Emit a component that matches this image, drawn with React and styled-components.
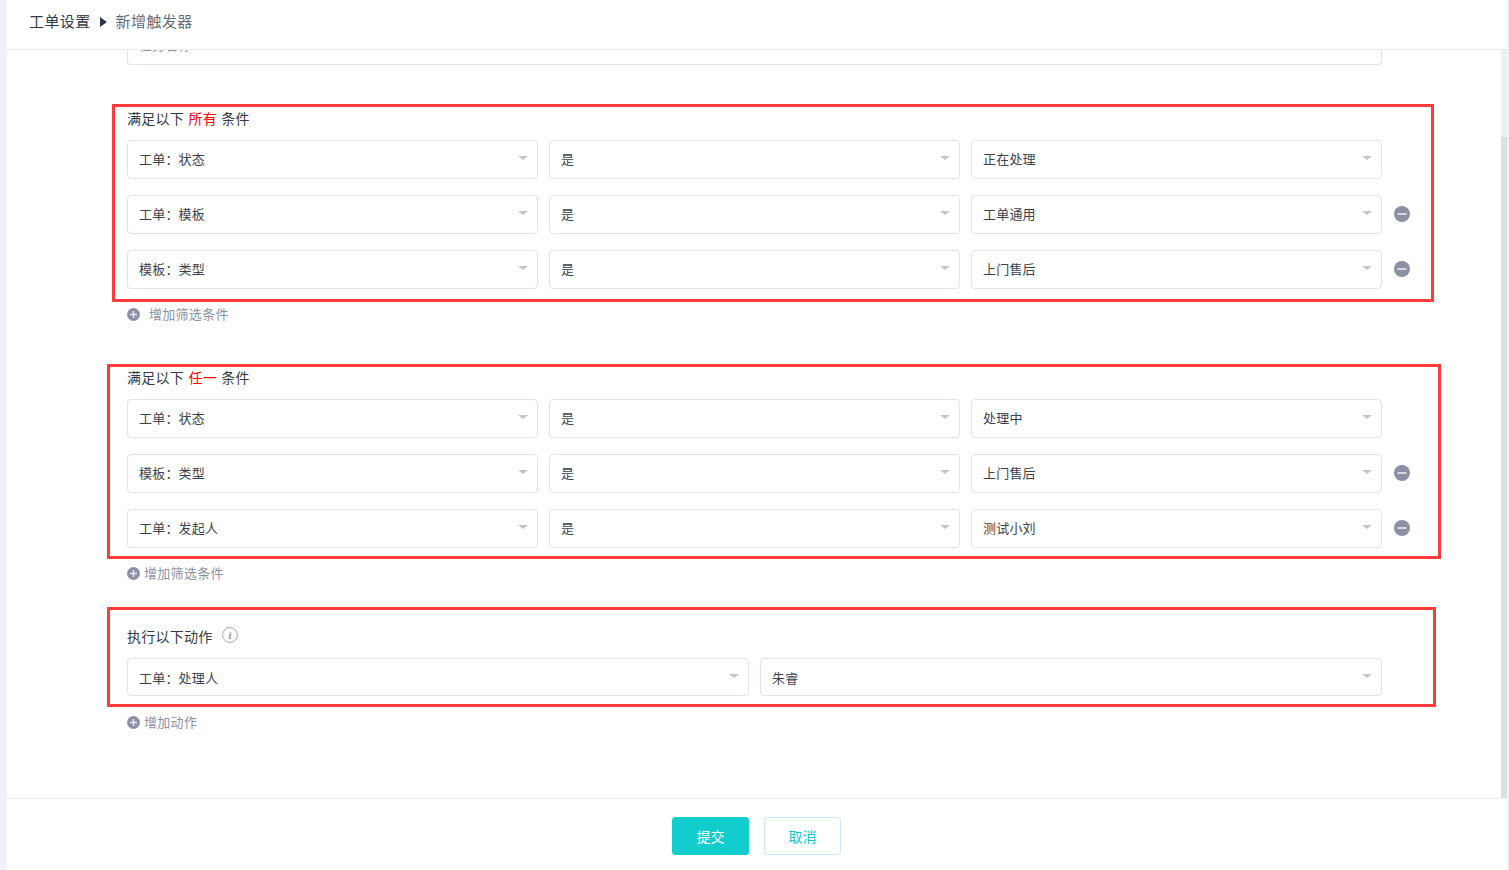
import React from "react";
import styled, { createGlobalStyle } from "styled-components";

const Global = createGlobalStyle`
  html, body { margin: 0; padding: 0; height: 100%; background: #f0f2f7; overflow: hidden; }
  body { font-family: "Noto Sans CJK SC", "Liberation Sans", sans-serif; color: #333a45; }
  * { box-sizing: border-box; }
`;

const Page = styled.div`
  width: 1500px;
  height: 870px;
  margin-left: 7px;
  background: #fff;
  display: flex;
  flex-direction: column;
`;

const Header = styled.header`
  height: 50px;
  flex: none;
  border-bottom: 1px solid #e8eaee;
  display: flex;
  align-items: center;
  padding: 0 0 8px 22px;
  font-size: 15px;
  line-height: 20px;
  letter-spacing: 0.4px;
`;

const Crumb = styled.span`
  color: ${p => (p.$muted ? "#666c76" : "#333a45")};
`;

const CrumbArrow = styled.span`
  width: 0;
  height: 0;
  margin: 3px 9px 0 9px;
  border-style: solid;
  border-width: 5.5px 0 5.5px 7px;
  border-color: transparent transparent transparent #2f3645;
`;

const Body = styled.main`
  flex: 1;
  min-height: 0;
  display: flex;
  overflow: hidden;
`;

const Scroll = styled.div`
  flex: 1;
  min-width: 0;
  padding-left: 120px;
`;

const Track = styled.div`
  width: 6px;
  flex: none;
  background: #f0f0f0;
  padding-top: 87px;
`;

const Thumb = styled.div`
  height: 100%;
  background: #dfdfdf;
`;

const NameField = styled.div`
  width: 1255px;
  height: 15px;
  border: 1px solid #dfe4ec;
  border-top: 0;
  border-radius: 0 0 4px 4px;
  overflow: hidden;
  margin-bottom: 39px;
  font-size: 13px;
  line-height: 18px;
  color: #8b919b;
  padding-left: 11px;
`;

const NameText = styled.span`
  display: block;
  margin-top: -14px;
`;

const Frame = styled.section`
  border: 3px solid #ff3b3b;
  margin-left: ${p => p.$left}px;
  width: ${p => p.$width}px;
  height: ${p => p.$height}px;
  padding-left: ${p => -p.$left - 3}px;
  padding-top: ${p => p.$top}px;
`;

const Label = styled.div`
  display: flex;
  align-items: center;
  height: 20px;
  font-size: 14px;
  line-height: 20px;
  color: #333a45;
  margin-bottom: ${p => p.$gap}px;
  white-space: pre;
  letter-spacing: 0.25px;
`;

const Strong = styled.span`
  color: #f00;
  margin: 0 1px 0 1px;
`;

const Rows = styled.div`
  display: flex;
  flex-direction: column;
  gap: 16px;
`;

const Row = styled.div`
  display: flex;
  align-items: center;
  gap: 11px;
`;

const Select = styled.div`
  width: ${p => p.$width}px;
  height: ${p => p.$height}px;
  flex: none;
  border: 1px solid #dfe3ea;
  border-radius: 4px;
  background: #fff;
  display: flex;
  align-items: center;
  justify-content: space-between;
  padding: 0 9px 0 11px;
  font-size: 13px;
  letter-spacing: 0.2px;
  color: #3c424d;
`;

const SelectText = styled.span`
  padding-bottom: ${p => p.$lift}px;
`;

const Caret = styled.span`
  width: 0;
  height: 0;
  margin-top: -3px;
  border-style: solid;
  border-width: 4px 5px 0 5px;
  border-color: #c4c4c4 transparent transparent transparent;
`;

const IconSlot = styled.span`
  width: 16px;
  height: 16px;
  margin: -1px 0 0 1px;
  flex: none;
  display: block;
`;

const AddRow = styled.div`
  display: flex;
  align-items: center;
  height: 20px;
  margin-top: ${p => p.$top}px;
  margin-bottom: ${p => p.$bottom || 0}px;
  font-size: 13px;
  letter-spacing: 0.3px;
  color: #8b91a3;
`;

const AddText = styled.span`
  padding-bottom: 2px;
`;

const AddIcon = styled.span`
  width: 13px;
  height: 13px;
  flex: none;
  margin-right: ${p => p.$gap}px;
  display: block;
`;

const InfoIcon = styled.span`
  width: 16px;
  height: 16px;
  margin: -3px 0 0 9px;
  display: block;
`;

const Footer = styled.footer`
  height: 72px;
  flex: none;
  border-top: 1px solid #eeeeee;
  display: flex;
  justify-content: center;
  align-items: center;
  gap: 15px;
  padding: 2px 1px 0 0;
`;

const Button = styled.button`
  width: 77px;
  height: 38px;
  border-radius: 3px;
  font-family: inherit;
  font-size: 14px;
  padding: 0;
  border: 1px solid ${p => (p.$primary ? "#12cccd" : "#c9e5fb")};
  background: ${p => (p.$primary ? "#12cccd" : "#fff")};
  color: ${p => (p.$primary ? "#fff" : "#12c6c8")};
`;

const Svg = styled.svg`
  display: block;
  width: 100%;
  height: 100%;
`;

const Minus = () => (
  <IconSlot>
    <Svg viewBox="0 0 16 16">
      <circle cx="8" cy="8" r="8" fill="#8c90a4" />
      <rect x="3.5" y="7" width="9" height="2" fill="#d8d9df" />
    </Svg>
  </IconSlot>
);

const Add = ({ gap, children }) => (
  <>
    <AddIcon $gap={gap}>
      <Svg viewBox="0 0 13 13">
        <circle cx="6.5" cy="6.5" r="6.5" fill="#8c90a4" />
        <path d="M3 6.5h7M6.5 3v7" stroke="#e6e7eb" strokeWidth="1.6" />
      </Svg>
    </AddIcon>
    <AddText>{children}</AddText>
  </>
);

const Sel = ({ w, h = 39, lift = 2, children }) => (
  <Select $width={w} $height={h}>
    <SelectText $lift={lift}>{children}</SelectText>
    <Caret />
  </Select>
);

const Conditions = ({ rows }) => (
  <Rows>
    {rows.map((r, i) => (
      <Row key={i}>
        <Sel w={411}>{r[0]}</Sel>
        <Sel w={411}>{r[1]}</Sel>
        <Sel w={411}>{r[2]}</Sel>
        {i > 0 && <Minus />}
      </Row>
    ))}
  </Rows>
);

export default function App() {
  return (
    <Page>
      <Global />
      <Header>
        <Crumb>工单设置</Crumb>
        <CrumbArrow />
        <Crumb $muted>新增触发器</Crumb>
      </Header>
      <Body>
        <Scroll>
          <NameField>
            <NameText>任务名称</NameText>
          </NameField>
          <Frame $left={-15} $width={1322} $height={198} $top={1}>
            <Label $gap={12}>
              满足以下 <Strong>所有</Strong> 条件
            </Label>
            <Conditions
              rows={[
                ["工单：状态", "是", "正在处理"],
                ["工单：模板", "是", "工单通用"],
                ["模板：类型", "是", "上门售后"],
              ]}
            />
          </Frame>
          <AddRow $top={2} $bottom={40}>
            <Add gap={9}>增加筛选条件</Add>
          </AddRow>
          <Frame $left={-20} $width={1334} $height={195} $top={0}>
            <Label $gap={12}>
              满足以下 <Strong>任一</Strong> 条件
            </Label>
            <Conditions
              rows={[
                ["工单：状态", "是", "处理中"],
                ["模板：类型", "是", "上门售后"],
                ["工单：发起人", "是", "测试小刘"],
              ]}
            />
          </Frame>
          <AddRow $top={4} $bottom={24}>
            <Add gap={4}>增加筛选条件</Add>
          </AddRow>
          <Frame $left={-20} $width={1329} $height={100} $top={16}>
            <Label $gap={12}>
              执行以下动作
              <InfoIcon>
                <Svg viewBox="0 0 16 16">
                  <circle cx="8" cy="8" r="7.4" fill="none" stroke="#a9a9a9" />
                  <text x="8" y="11.5" fontSize="10" fontStyle="italic" fontWeight="700" textAnchor="middle" fontFamily="Liberation Serif" fill="#8d8d8d">i</text>
                </Svg>
              </InfoIcon>
            </Label>
            <Row>
              <Sel w={622} h={38} lift={0}>工单：处理人</Sel>
              <Sel w={622} h={38} lift={0}>朱睿</Sel>
            </Row>
          </Frame>
          <AddRow $top={5}>
            <Add gap={4}>增加动作</Add>
          </AddRow>
        </Scroll>
        <Track>
          <Thumb />
        </Track>
      </Body>
      <Footer>
        <Button $primary>提交</Button>
        <Button>取消</Button>
      </Footer>
    </Page>
  );
}
